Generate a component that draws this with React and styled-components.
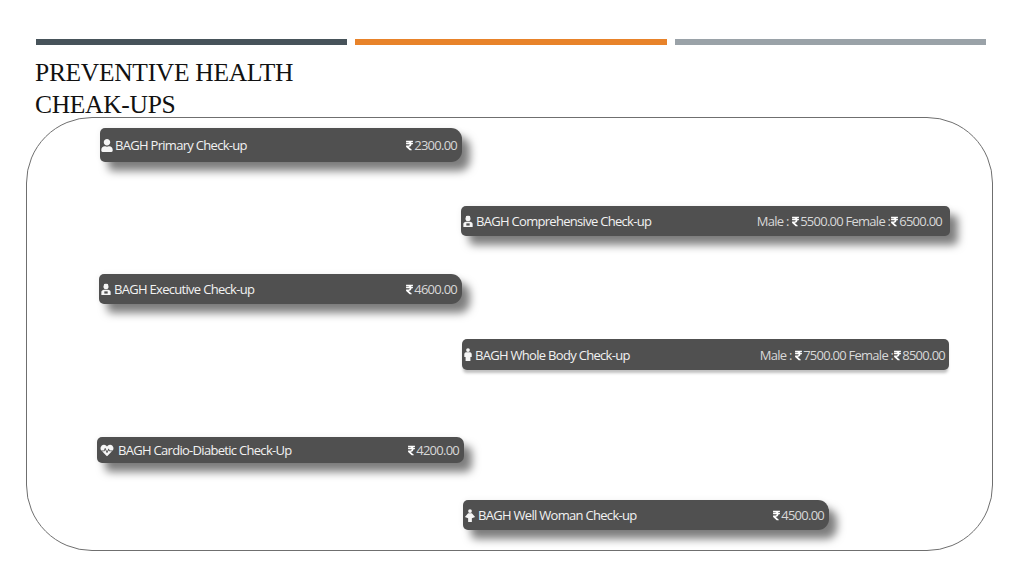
import React from "react";
import styled, { createGlobalStyle } from "styled-components";
import { FaUser, FaHeartbeat, FaRupeeSign } from "react-icons/fa";

const GlobalStyle = createGlobalStyle`
  html, body {
    margin: 0;
    padding: 0;
    background: #fff;
  }
`;

// small person glyphs, the icon packs have nothing this stocky
const Executive = () => (
  <svg viewBox="0 0 12 14">
    <path fill="currentColor" d="M3.2 4.2 4 1.2Q6 .2 8 1.2l.8 3Q8.6 6.6 6 6.8 3.4 6.6 3.2 4.2Z" />
    <path fill="currentColor" d="M1 13v-3.5Q1.2 7.6 3.6 7.2h4.8q2.4.4 2.6 2.3V13Z" />
    <rect x="4.2" y="9" width="3.6" height="2.4" fill="#505050" />
  </svg>
);

const Body = () => (
  <svg viewBox="0 0 10 14">
    <circle cx="5" cy="2.2" r="2" fill="currentColor" />
    <path fill="currentColor" d="M2.6 4.6h4.8Q9 5 9 6.6v3.2H7.6V14H2.4V9.8H1V6.6Q1 5 2.6 4.6Z" />
  </svg>
);

const Woman = () => (
  <svg viewBox="0 0 12 14">
    <circle cx="6" cy="2.2" r="2" fill="currentColor" />
    <path fill="currentColor" d="M4 4.6h4L11.5 8.6 8 10v4H4v-4L.5 8.6Z" />
  </svg>
);

const checkups = [
  { name: "BAGH Primary Check-up", icon: FaUser, iconSize: 12, left: 73, top: 10, width: 362, height: 34, radius: 11, right: 5, prices: [["", "2300.00"]] },
  { name: "BAGH Comprehensive Check-up", icon: Executive, iconSize: 12, left: 434, top: 44, width: 489, height: 30, radius: 5, right: 8, prices: [["Male : ", "5500.00"], [" Female :", "6500.00"]] },
  { name: "BAGH Executive Check-up", icon: Executive, iconSize: 12, left: 72, top: 38, width: 363, height: 30, radius: 11, right: 5, prices: [["", "4600.00"]] },
  { name: "BAGH Whole Body Check-up", icon: Body, iconSize: 10, left: 435, top: 35, width: 487, height: 31, radius: 5, right: 4, flat: true, prices: [["Male : ", "7500.00"], [" Female :", "8500.00"]] },
  { name: "BAGH Cardio-Diabetic Check-Up", icon: FaHeartbeat, iconSize: 18, left: 70, top: 67, width: 367, height: 26, radius: 7, right: 5, prices: [["", "4200.00"]] },
  { name: "BAGH Well Woman Check-up", icon: Woman, iconSize: 12, left: 436, top: 37, width: 366, height: 30, radius: 11, right: 5, prices: [["", "4500.00"]] },
];

const App = () => {
  return (
    <Page>
      <GlobalStyle />
      <TopBars>
        <TopBar $color="#47535a" />
        <TopBar $color="#e8832a" />
        <TopBar $color="#9aa2a8" />
      </TopBars>
      <Title>
        PREVENTIVE HEALTH
        <br />
        CHEAK-UPS
      </Title>
      <Board>
        {checkups.map((item) => (
          <Card
            key={item.name}
            $left={item.left}
            $top={item.top}
            $width={item.width}
            $height={item.height}
            $radius={item.radius}
            $right={item.right}
            $flat={item.flat}
          >
            <CardName $iconSize={item.iconSize}>
              <item.icon />
              {item.name}
            </CardName>
            <Price>
              {item.prices.map(([label, amount]) => (
                <React.Fragment key={amount}>
                  {label}
                  <FaRupeeSign />
                  {amount}
                </React.Fragment>
              ))}
            </Price>
          </Card>
        ))}
      </Board>
    </Page>
  );
};

const Page = styled.div`
  width: 1024px;
  height: 576px;
  box-sizing: border-box;
  padding: 39px 38px 0 26px;
  overflow: hidden;
  background: #fff;
`;

const TopBars = styled.div`
  display: flex;
  gap: 8px;
  margin-left: 10px;
`;

const TopBar = styled.div`
  flex: 1;
  height: 6px;
  background: ${(props) => props.$color};
`;

const Title = styled.h1`
  margin: 12px 0 0 9px;
  height: 60px;
  font-family: "Liberation Serif", serif;
  font-size: 25.5px;
  font-weight: 400;
  line-height: 32px;
  letter-spacing: -0.3px;
  color: #111;
`;

const Board = styled.div`
  display: flex;
  flex-direction: column;
  align-items: flex-start;
  width: 967px;
  height: 434px;
  box-sizing: border-box;
  border: 1px solid #6f6f6f;
  border-radius: 66px;
`;

const Card = styled.div`
  display: flex;
  align-items: center;
  justify-content: space-between;
  flex-shrink: 0;
  box-sizing: border-box;
  margin-left: ${(props) => props.$left}px;
  margin-top: ${(props) => props.$top}px;
  width: ${(props) => props.$width}px;
  height: ${(props) => props.$height}px;
  padding: 0 ${(props) => props.$right}px 0 1px;
  background: #505050;
  border-radius: 5px ${(props) => props.$radius}px ${(props) => props.$radius}px 5px;
  box-shadow: ${(props) =>
    props.$flat
      ? "0 4px 3px -1px rgba(0, 0, 0, 0.25)"
      : "8px 9px 9px rgba(0, 0, 0, 0.5), 0 0 6px rgba(0, 0, 0, 0.06)"};
  font-family: "Open Sans", sans-serif;
  font-size: 13px;
  color: #fff;
`;

const CardName = styled.span`
  display: flex;
  align-items: center;
  gap: 2px;
  letter-spacing: -0.7px;
  color: #f2f2f2;

  svg {
    width: ${(props) => props.$iconSize}px;
    height: 13px;
    color: #f6f6f6;
  }
`;

const Price = styled.span`
  color: #d8d8d8;
  letter-spacing: -0.75px;
  white-space: pre;

  svg {
    width: 9px;
    height: 11px;
    margin-bottom: -1px;
    color: #fff;
  }
`;

export default App;
